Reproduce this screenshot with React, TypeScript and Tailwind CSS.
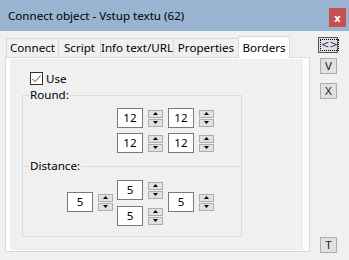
import React from "react";

const Arrow = ({ up }: { up?: boolean }) => (
  <svg width="5" height="3" viewBox="0 0 5 3">
    <path d={up ? "M0 3 L2.5 0 L5 3 Z" : "M0 0 L5 0 L2.5 3 Z"} fill="#000" />
  </svg>
);

const SpinBox = ({ value }: { value: string }) => (
  <div className="flex items-center gap-[5px]">
    <div className="w-[26px] h-[20px] bg-white border border-[#7a7a7a] flex items-center justify-center leading-none">
      {value}
    </div>
    <div className="flex flex-col gap-[1px]">
      <div className="w-[15px] h-[8px] bg-[#e1e1e1] border border-[#adadad] flex items-center justify-center">
        <Arrow up />
      </div>
      <div className="w-[15px] h-[8px] bg-[#e1e1e1] border border-[#adadad] flex items-center justify-center">
        <Arrow />
      </div>
    </div>
  </div>
);

const tabs = [
  { label: "Connect", w: "w-[52px]" },
  { label: "Script", w: "w-[42px]" },
  { label: "Info text/URL", w: "w-[73px]" },
  { label: "Properties", w: "w-[65px]" },
];

const SideButton = ({ label }: { label: string }) => (
  <div className="w-[17px] h-[16px] bg-[#e1e1e1] border border-[#adadad] flex items-center justify-center leading-none text-[#1a1a3a]">
    {label}
  </div>
);

export default function App() {
  return (
    <div className="w-[349px] h-[260px] bg-[#f0f0f0] flex flex-col font-['Noto_Sans',sans-serif] text-[11.6px] text-black overflow-hidden whitespace-nowrap">
      <div className="h-[31px] bg-[#99b4d1] flex items-start shrink-0">
        <span className="ml-[8px] mt-[7px]">Connect object - Vstup textu (62)</span>
        <div className="ml-auto mr-[3px] mt-[8px] w-[17px] h-[19px] bg-[#c75050] flex items-center justify-center text-white font-bold text-[11px] leading-none">
          x
        </div>
      </div>

      <div className="flex flex-1">
        <div className="ml-[5px] mt-[5px] w-[305px] flex flex-col">
          <div className="flex items-end h-[21px] ml-[1px]">
            {tabs.map((t) => (
              <div
                key={t.label}
                className={`${t.w} h-[19px] border-t border-l border-[#d9d9d9] flex items-center justify-center leading-none`}
              >
                {t.label}
              </div>
            ))}
            <div className="w-[52px] h-[22px] -mb-[1px] relative z-10 bg-white border border-b-0 border-[#d9d9d9] flex items-center justify-center leading-none">
              Borders
            </div>
          </div>
          <div className="h-[195px] bg-white border border-[#d9d9d9] pl-[4px] pr-[6px] py-[1px] flex">
            <div className="flex-1 bg-[#f0f0f0] flex flex-col">
              <label className="mt-[13px] ml-[20px] flex items-center gap-[3px] leading-none">
                <span className="w-[13px] h-[13px] bg-white border border-[#333] flex items-center justify-center">
                  <svg width="9" height="8" viewBox="0 0 9 8">
                    <path d="M0.5 4 L3 6.8 L8.5 0.5" stroke="#555" strokeWidth="1" fill="none" />
                  </svg>
                </span>
                <span>Use</span>
              </label>

              <fieldset className="ml-[12px] mt-[2px] w-[220px] border border-b-0 border-[#dcdcdc] p-0">
                <legend className="ml-[6px] px-[1px] leading-[16px]">Round:</legend>
                <div className="pl-[94px] pt-[5px] pb-[13px] grid grid-cols-[auto_auto] gap-x-[5px] gap-y-[5px] w-fit">
                  <SpinBox value="12" />
                  <SpinBox value="12" />
                  <SpinBox value="12" />
                  <SpinBox value="12" />
                </div>
              </fieldset>

              <fieldset className="ml-[12px] -mt-[8px] w-[220px] border border-[#dcdcdc] p-0">
                <legend className="ml-[6px] px-[1px] leading-[16px]">Distance:</legend>
                <div className="pl-[44px] pt-[6px] pb-[10px] flex items-center gap-[4px]">
                  <div className="mt-[-2px]">
                    <SpinBox value="5" />
                  </div>
                  <div className="flex flex-col gap-[6px]">
                    <SpinBox value="5" />
                    <SpinBox value="5" />
                  </div>
                  <div className="ml-[1px] mt-[-2px]">
                    <SpinBox value="5" />
                  </div>
                </div>
              </fieldset>
            </div>
          </div>
        </div>

        <div className="ml-[8px] w-[20px] flex flex-col items-end pb-[7px]">
          <div className="mt-[6px] w-[20px] h-[16px] bg-[#e1e1e1] border border-[#555] p-[1px] flex">
            <div className="flex-1 border border-dotted border-black flex items-center justify-center leading-none text-[10px] text-[#3a2a6a] font-['DejaVu_Sans',sans-serif]">
              &lt;&gt;
            </div>
          </div>
          <div className="mt-[5px] mr-[1px]">
            <SideButton label="V" />
          </div>
          <div className="mt-[9px] mr-[1px]">
            <SideButton label="X" />
          </div>
          <div className="mt-auto mr-[1px]">
            <SideButton label="T" />
          </div>
        </div>
      </div>
    </div>
  );
}
